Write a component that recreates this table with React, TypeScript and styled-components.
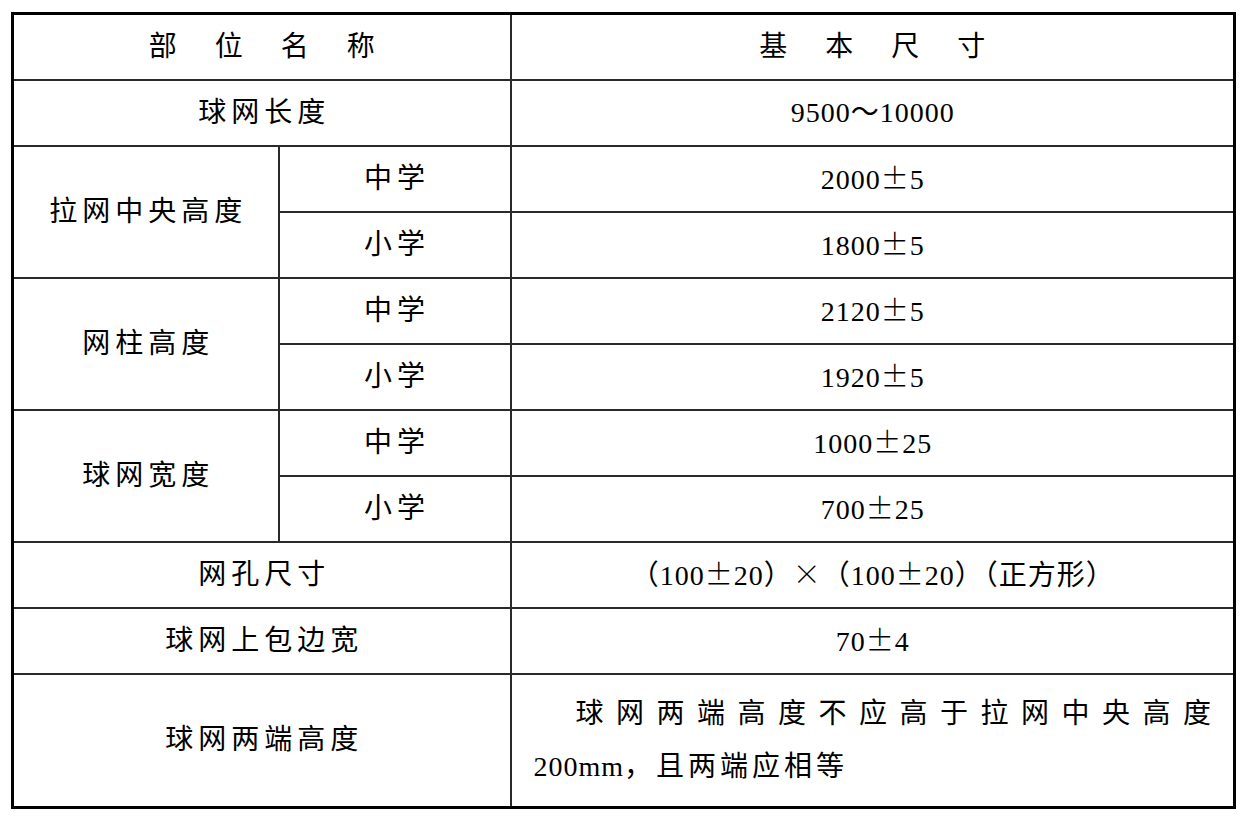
import styled, { createGlobalStyle } from "styled-components";

const GlobalStyle = createGlobalStyle`
  html, body {
    margin: 0;
    padding: 0;
    background: #ffffff;
  }
  body {
    font-family: "Liberation Serif", "Noto Sans CJK SC", serif;
    color: #000000;
  }
`;

const Page = styled.div`
  padding: 12px 0 0 11px;
  width: 1247px;
  height: 821px;
  box-sizing: border-box;
`;

const SpecTable = styled.table`
  border-collapse: collapse;
  table-layout: fixed;
  width: 1225px;
  border: 3px solid #000;
  font-family: "Liberation Serif", "Noto Sans CJK SC", serif;
  font-size: 28px;
  color: #000;
`;

const Row = styled.tr<{ $tall?: boolean }>`
  height: ${({ $tall }) => ($tall ? "134px" : "66px")};
`;

const Cell = styled.td<{ $spacing?: number }>`
  border: 2px solid #2a2a2a;
  padding: 0 0 0 ${({ $spacing = 5 }) => $spacing}px;
  text-align: center;
  vertical-align: middle;
  letter-spacing: ${({ $spacing = 5 }) => $spacing}px;
  line-height: 1;
  white-space: nowrap;
`;

const HeadCell = styled(Cell).attrs({ as: "th" })`
  font-weight: 400;
`;

// full-width ± and × as in the printed table
const Sym = styled.span`
  display: inline-block;
  width: 1em;
  text-align: center;
  letter-spacing: 0;
  margin-right: 1px;
  font-family: "Noto Sans CJK SC", sans-serif;
  font-feature-settings: "fwid" 1;
  font-weight: 300;
`;

const NoteCell = styled.td`
  border: 2px solid #2a2a2a;
  padding: 0 22px 0 22px;
  vertical-align: middle;
  line-height: 53px;
`;

const NoteLine = styled.span<{ $first?: boolean }>`
  display: block;
  text-align: ${({ $first }) => ($first ? "justify" : "left")};
  text-align-last: ${({ $first }) => ($first ? "justify" : "left")};
  text-indent: ${({ $first }) => ($first ? "42px" : "0")};
  letter-spacing: ${({ $first }) => ($first ? "0" : "4px")};
`;

const Num = styled.span`
  letter-spacing: 1px;
`;

const PM = () => <Sym>±</Sym>;

type SubRow = { level: string; value: React.ReactNode };

const groups: { name: string; rows: SubRow[] }[] = [
  {
    name: "拉网中央高度",
    rows: [
      { level: "中学", value: <>2000<PM />5</> },
      { level: "小学", value: <>1800<PM />5</> },
    ],
  },
  {
    name: "网柱高度",
    rows: [
      { level: "中学", value: <>2120<PM />5</> },
      { level: "小学", value: <>1920<PM />5</> },
    ],
  },
  {
    name: "球网宽度",
    rows: [
      { level: "中学", value: <>1000<PM />25</> },
      { level: "小学", value: <>700<PM />25</> },
    ],
  },
];

export default function App() {
  return (
    <>
      <GlobalStyle />
      <Page>
        <SpecTable>
          <colgroup>
            <col style={{ width: 266 }} />
            <col style={{ width: 232 }} />
            <col />
          </colgroup>
          <thead>
            <Row>
              <HeadCell colSpan={2} $spacing={38}>
                部位名称
              </HeadCell>
              <HeadCell $spacing={38}>基本尺寸</HeadCell>
            </Row>
          </thead>
          <tbody>
            <Row>
              <Cell colSpan={2}>球网长度</Cell>
              <Cell $spacing={1}>9500～10000</Cell>
            </Row>
            {groups.map((group) =>
              group.rows.map((row, i) => (
                <Row key={group.name + row.level}>
                  {i === 0 && <Cell rowSpan={group.rows.length}>{group.name}</Cell>}
                  <Cell>{row.level}</Cell>
                  <Cell $spacing={1}>{row.value}</Cell>
                </Row>
              ))
            )}
            <Row>
              <Cell colSpan={2}>网孔尺寸</Cell>
              <Cell $spacing={1}>
                （100<PM />20）<Sym>×</Sym>（100<PM />20）（正方形）
              </Cell>
            </Row>
            <Row>
              <Cell colSpan={2}>球网上包边宽</Cell>
              <Cell $spacing={1}>
                70<PM />4
              </Cell>
            </Row>
            <Row $tall>
              <Cell colSpan={2}>球网两端高度</Cell>
              <NoteCell>
                <NoteLine $first>球网两端高度不应高于拉网中央高度</NoteLine>
                <NoteLine>
                  <Num>200mm</Num>，且两端应相等
                </NoteLine>
              </NoteCell>
            </Row>
          </tbody>
        </SpecTable>
      </Page>
    </>
  );
}
